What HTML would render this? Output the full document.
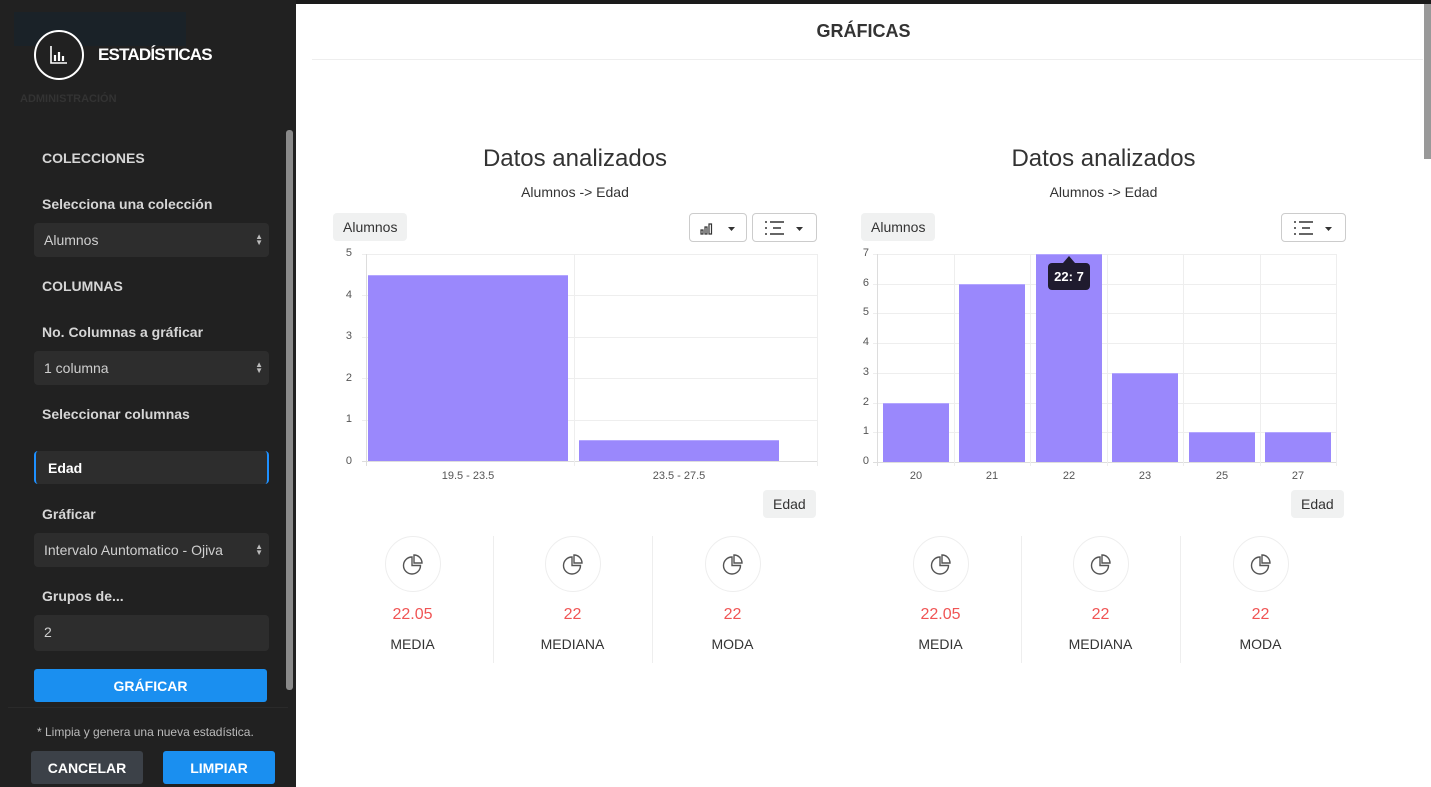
<!DOCTYPE html><html><head><meta charset="utf-8"><style>
*{box-sizing:border-box;margin:0;padding:0}
body{width:1431px;height:787px;overflow:hidden;background:#1e1e1e;font-family:"Liberation Sans",sans-serif;position:relative}
.a{position:absolute}
.sb{left:0;top:0;width:296px;height:787px;background:#212121}
.lbl{position:absolute;left:42px;color:#d6d6d6;font-weight:bold;font-size:14px}
.inp{position:absolute;left:34px;width:235px;height:34px;background:#2d2d2d;border-radius:4px;color:#cfcfcf;font-size:14px;padding:9px 10px}
.arr{position:absolute;right:6px;top:11px;font-size:8px;line-height:6px;color:#bbb}
.btn{position:absolute;color:#fff;font-weight:bold;font-size:14px;text-align:center;border-radius:3px}
.main{left:296px;top:4px;width:1135px;height:783px;background:#fff}
.tag{position:absolute;background:#f0f1f1;border-radius:4px;font-size:14px;color:#333;padding:6px 10px}
.dd{position:absolute;height:29px;border:1px solid #ccc;border-radius:4px;background:#fff}
.g{position:absolute;background:#eeeeee}
.bar{position:absolute;background:#9a88fc;border-top:1px solid #b3a6ff}
.yl{position:absolute;font-size:11px;color:#555;width:20px;text-align:right}
.xl{position:absolute;font-size:11px;color:#555;text-align:center;width:100px}
.stat{position:absolute;width:159px;text-align:center}
.circ{width:56px;height:56px;border:1px solid #eee;border-radius:50%;margin:0 auto}
.v{color:#f05454;font-size:16px;margin-top:14px}
.n{color:#333;font-size:14px;margin-top:12px}
</style></head><body>
<div class="a sb"></div>
<div class="a" style="left:14px;top:12px;width:172px;height:34px;background:#1a2228"></div>
<div class="a" style="left:34px;top:30px;width:50px;height:50px;border:2px solid #fff;border-radius:50%;background:#212121">
<svg width="46" height="46" viewBox="0 0 46 46" style="position:absolute;left:0;top:0"><path d="M15 14v17h16" stroke="#fff" stroke-width="1.6" fill="none"/><path d="M19 23v6M23 20v9M27 24v5" stroke="#fff" stroke-width="2.2"/></svg></div>
<div class="a" style="left:98px;top:45px;color:#fff;font-size:17px;font-weight:bold;letter-spacing:-0.8px">ESTADÍSTICAS</div>
<div class="a" style="left:20px;top:93px;color:#333;font-size:11px;font-weight:bold">ADMINISTRACIÓN</div>
<div class="a" style="left:286px;top:130px;width:7px;height:560px;background:#8a8a8a;border-radius:3px"></div>
<div class="lbl" style="top:150px">COLECCIONES</div>
<div class="lbl" style="top:196px">Selecciona una colección</div>
<div class="inp" style="top:223px">Alumnos<div class="arr">▲<br>▼</div></div>
<div class="lbl" style="top:278px">COLUMNAS</div>
<div class="lbl" style="top:324px">No. Columnas a gráficar</div>
<div class="inp" style="top:351px">1 columna<div class="arr">▲<br>▼</div></div>
<div class="lbl" style="top:406px">Seleccionar columnas</div>
<div class="inp" style="top:451px;height:33px;border-left:2px solid #1e90ff;border-right:2px solid #1e90ff;color:#fff;font-weight:bold;padding-left:12px">Edad</div>
<div class="lbl" style="top:506px">Gráficar</div>
<div class="inp" style="top:533px">Intervalo Auntomatico - Ojiva<div class="arr">▲<br>▼</div></div>
<div class="lbl" style="top:588px">Grupos de...</div>
<div class="inp" style="top:615px;height:36px">2</div>
<div class="btn" style="left:34px;top:669px;width:233px;height:33px;background:#1a8ff0;padding-top:9px">GRÁFICAR</div>
<div class="a" style="left:8px;top:707px;width:280px;height:1px;background:#2a2a2a"></div>
<div class="a" style="left:37px;top:725px;color:#bbb;font-size:12px">* Limpia y genera una nueva estadística.</div>
<div class="btn" style="left:31px;top:751px;width:112px;height:33px;background:#3c4148;padding-top:9px">CANCELAR</div>
<div class="btn" style="left:163px;top:751px;width:112px;height:33px;background:#1a8ff0;padding-top:9px">LIMPIAR</div>

<div class="a main"></div>
<div class="a" style="left:296px;top:0;width:1135px;height:4px;background:#1b1b1b"></div>
<div class="a" style="left:1424px;top:4px;width:7px;height:155px;background:#999"></div>
<div class="a" style="left:296px;top:21px;width:1135px;text-align:center;font-weight:bold;font-size:18px;color:#333">GRÁFICAS</div>
<div class="a" style="left:312px;top:59px;width:1111px;height:1px;background:#eee"></div>

<!-- chart 1 -->
<div class="a" style="left:333px;top:145px;width:484px;text-align:center;font-size:24px;color:#333">Datos analizados</div>
<div class="a" style="left:333px;top:184px;width:484px;text-align:center;font-size:14px;color:#333">Alumnos -&gt; Edad</div>
<div class="tag" style="left:333px;top:213px">Alumnos</div>
<div class="dd" style="left:689px;top:213px;width:58px"><svg width="56" height="27"><path d="M11 16h2v4h-2zM15 13h2v7h-2zM19 10h2.5v10H19z" fill="none" stroke="#333" stroke-width="1.2"/><path d="M38 13h7l-3.5 4z" fill="#333"/></svg></div>
<div class="dd" style="left:752px;top:213px;width:65px"><svg width="63" height="27"><path d="M12 8h2M12 14h2M12 20h2M17 8h14M20 14h8M17 20h14" stroke="#333" stroke-width="1.5"/><path d="M43 13h7l-3.5 4z" fill="#333"/></svg></div>
<div class="g" style="left:362px;top:254px;width:455px;height:1px"></div>
<div class="g" style="left:362px;top:295px;width:455px;height:1px"></div>
<div class="g" style="left:362px;top:337px;width:455px;height:1px"></div>
<div class="g" style="left:362px;top:378px;width:455px;height:1px"></div>
<div class="g" style="left:362px;top:420px;width:455px;height:1px"></div>
<div class="g" style="left:362px;top:461px;width:455px;height:1px;background:#ddd"></div>
<div class="g" style="left:366px;top:254px;width:1px;height:212px;background:#ddd"></div>
<div class="g" style="left:574px;top:254px;width:1px;height:212px"></div>
<div class="g" style="left:817px;top:254px;width:1px;height:212px"></div>
<div class="bar" style="left:368px;top:275px;width:200px;height:186px"></div>
<div class="bar" style="left:579px;top:440px;width:200px;height:21px"></div>
<div class="yl" style="left:332px;top:247px">5</div><div class="yl" style="left:332px;top:289px">4</div><div class="yl" style="left:332px;top:330px">3</div><div class="yl" style="left:332px;top:372px">2</div><div class="yl" style="left:332px;top:413px">1</div><div class="yl" style="left:332px;top:455px">0</div>
<div class="xl" style="left:418px;top:470px">19.5 - 23.5</div><div class="xl" style="left:629px;top:470px">23.5 - 27.5</div>
<div class="tag" style="left:763px;top:490px">Edad</div>
<div class="stat" style="left:333px;top:536px"><div class="circ"><svg width="54" height="54"><path d="M26 20a8.5 8.5 0 1 0 8.5 8.5h-8.5z" fill="none" stroke="#555" stroke-width="1.4"/><path d="M28 18a8 8 0 0 1 8 8h-8z" fill="none" stroke="#555" stroke-width="1.4"/></svg></div><div class="v">22.05</div><div class="n">MEDIA</div></div>
<div class="a" style="left:493px;top:536px;width:1px;height:127px;background:#eee"></div>
<div class="stat" style="left:493px;top:536px"><div class="circ"><svg width="54" height="54"><path d="M26 20a8.5 8.5 0 1 0 8.5 8.5h-8.5z" fill="none" stroke="#555" stroke-width="1.4"/><path d="M28 18a8 8 0 0 1 8 8h-8z" fill="none" stroke="#555" stroke-width="1.4"/></svg></div><div class="v">22</div><div class="n">MEDIANA</div></div>
<div class="a" style="left:652px;top:536px;width:1px;height:127px;background:#eee"></div>
<div class="stat" style="left:653px;top:536px"><div class="circ"><svg width="54" height="54"><path d="M26 20a8.5 8.5 0 1 0 8.5 8.5h-8.5z" fill="none" stroke="#555" stroke-width="1.4"/><path d="M28 18a8 8 0 0 1 8 8h-8z" fill="none" stroke="#555" stroke-width="1.4"/></svg></div><div class="v">22</div><div class="n">MODA</div></div>

<!-- chart 2 -->
<div class="a" style="left:861px;top:145px;width:485px;text-align:center;font-size:24px;color:#333">Datos analizados</div>
<div class="a" style="left:861px;top:184px;width:485px;text-align:center;font-size:14px;color:#333">Alumnos -&gt; Edad</div>
<div class="tag" style="left:861px;top:213px">Alumnos</div>
<div class="dd" style="left:1281px;top:213px;width:65px"><svg width="63" height="27"><path d="M12 8h2M12 14h2M12 20h2M17 8h14M20 14h8M17 20h14" stroke="#333" stroke-width="1.5"/><path d="M43 13h7l-3.5 4z" fill="#333"/></svg></div>
<div class="g" style="left:873px;top:254px;width:463px;height:1px"></div>
<div class="g" style="left:873px;top:284px;width:463px;height:1px"></div>
<div class="g" style="left:873px;top:313px;width:463px;height:1px"></div>
<div class="g" style="left:873px;top:343px;width:463px;height:1px"></div>
<div class="g" style="left:873px;top:373px;width:463px;height:1px"></div>
<div class="g" style="left:873px;top:403px;width:463px;height:1px"></div>
<div class="g" style="left:873px;top:432px;width:463px;height:1px"></div>
<div class="g" style="left:873px;top:462px;width:463px;height:1px;background:#ddd"></div>
<div class="g" style="left:877px;top:254px;width:1px;height:212px;background:#ddd"></div>
<div class="g" style="left:954px;top:254px;width:1px;height:212px"></div>
<div class="g" style="left:1030px;top:254px;width:1px;height:212px"></div>
<div class="g" style="left:1107px;top:254px;width:1px;height:212px"></div>
<div class="g" style="left:1183px;top:254px;width:1px;height:212px"></div>
<div class="g" style="left:1260px;top:254px;width:1px;height:212px"></div>
<div class="g" style="left:1336px;top:254px;width:1px;height:212px"></div>
<div class="bar" style="left:883px;top:403px;width:66px;height:59px"></div>
<div class="bar" style="left:959px;top:284px;width:66px;height:178px"></div>
<div class="bar" style="left:1036px;top:254px;width:66px;height:208px"></div>
<div class="bar" style="left:1112px;top:373px;width:66px;height:89px"></div>
<div class="bar" style="left:1189px;top:432px;width:66px;height:30px"></div>
<div class="bar" style="left:1265px;top:432px;width:66px;height:30px"></div>
<div class="a" style="left:1063px;top:256px;width:0;height:0;border-left:6px solid transparent;border-right:6px solid transparent;border-bottom:7px solid #1f1b2e"></div>
<div class="a" style="left:1048px;top:263px;width:42px;height:27px;background:#1f1b2e;border-radius:4px;color:#fff;font-weight:bold;font-size:13px;text-align:center;padding-top:6px">22: 7</div>
<div class="yl" style="left:849px;top:247px">7</div><div class="yl" style="left:849px;top:277px">6</div><div class="yl" style="left:849px;top:306px">5</div><div class="yl" style="left:849px;top:336px">4</div><div class="yl" style="left:849px;top:366px">3</div><div class="yl" style="left:849px;top:396px">2</div><div class="yl" style="left:849px;top:425px">1</div><div class="yl" style="left:849px;top:455px">0</div>
<div class="xl" style="left:866px;top:470px">20</div><div class="xl" style="left:942px;top:470px">21</div><div class="xl" style="left:1019px;top:470px">22</div><div class="xl" style="left:1095px;top:470px">23</div><div class="xl" style="left:1172px;top:470px">25</div><div class="xl" style="left:1248px;top:470px">27</div>
<div class="tag" style="left:1291px;top:490px">Edad</div>
<div class="stat" style="left:861px;top:536px"><div class="circ"><svg width="54" height="54"><path d="M26 20a8.5 8.5 0 1 0 8.5 8.5h-8.5z" fill="none" stroke="#555" stroke-width="1.4"/><path d="M28 18a8 8 0 0 1 8 8h-8z" fill="none" stroke="#555" stroke-width="1.4"/></svg></div><div class="v">22.05</div><div class="n">MEDIA</div></div>
<div class="a" style="left:1021px;top:536px;width:1px;height:127px;background:#eee"></div>
<div class="stat" style="left:1021px;top:536px"><div class="circ"><svg width="54" height="54"><path d="M26 20a8.5 8.5 0 1 0 8.5 8.5h-8.5z" fill="none" stroke="#555" stroke-width="1.4"/><path d="M28 18a8 8 0 0 1 8 8h-8z" fill="none" stroke="#555" stroke-width="1.4"/></svg></div><div class="v">22</div><div class="n">MEDIANA</div></div>
<div class="a" style="left:1180px;top:536px;width:1px;height:127px;background:#eee"></div>
<div class="stat" style="left:1181px;top:536px"><div class="circ"><svg width="54" height="54"><path d="M26 20a8.5 8.5 0 1 0 8.5 8.5h-8.5z" fill="none" stroke="#555" stroke-width="1.4"/><path d="M28 18a8 8 0 0 1 8 8h-8z" fill="none" stroke="#555" stroke-width="1.4"/></svg></div><div class="v">22</div><div class="n">MODA</div></div>
</body></html>
